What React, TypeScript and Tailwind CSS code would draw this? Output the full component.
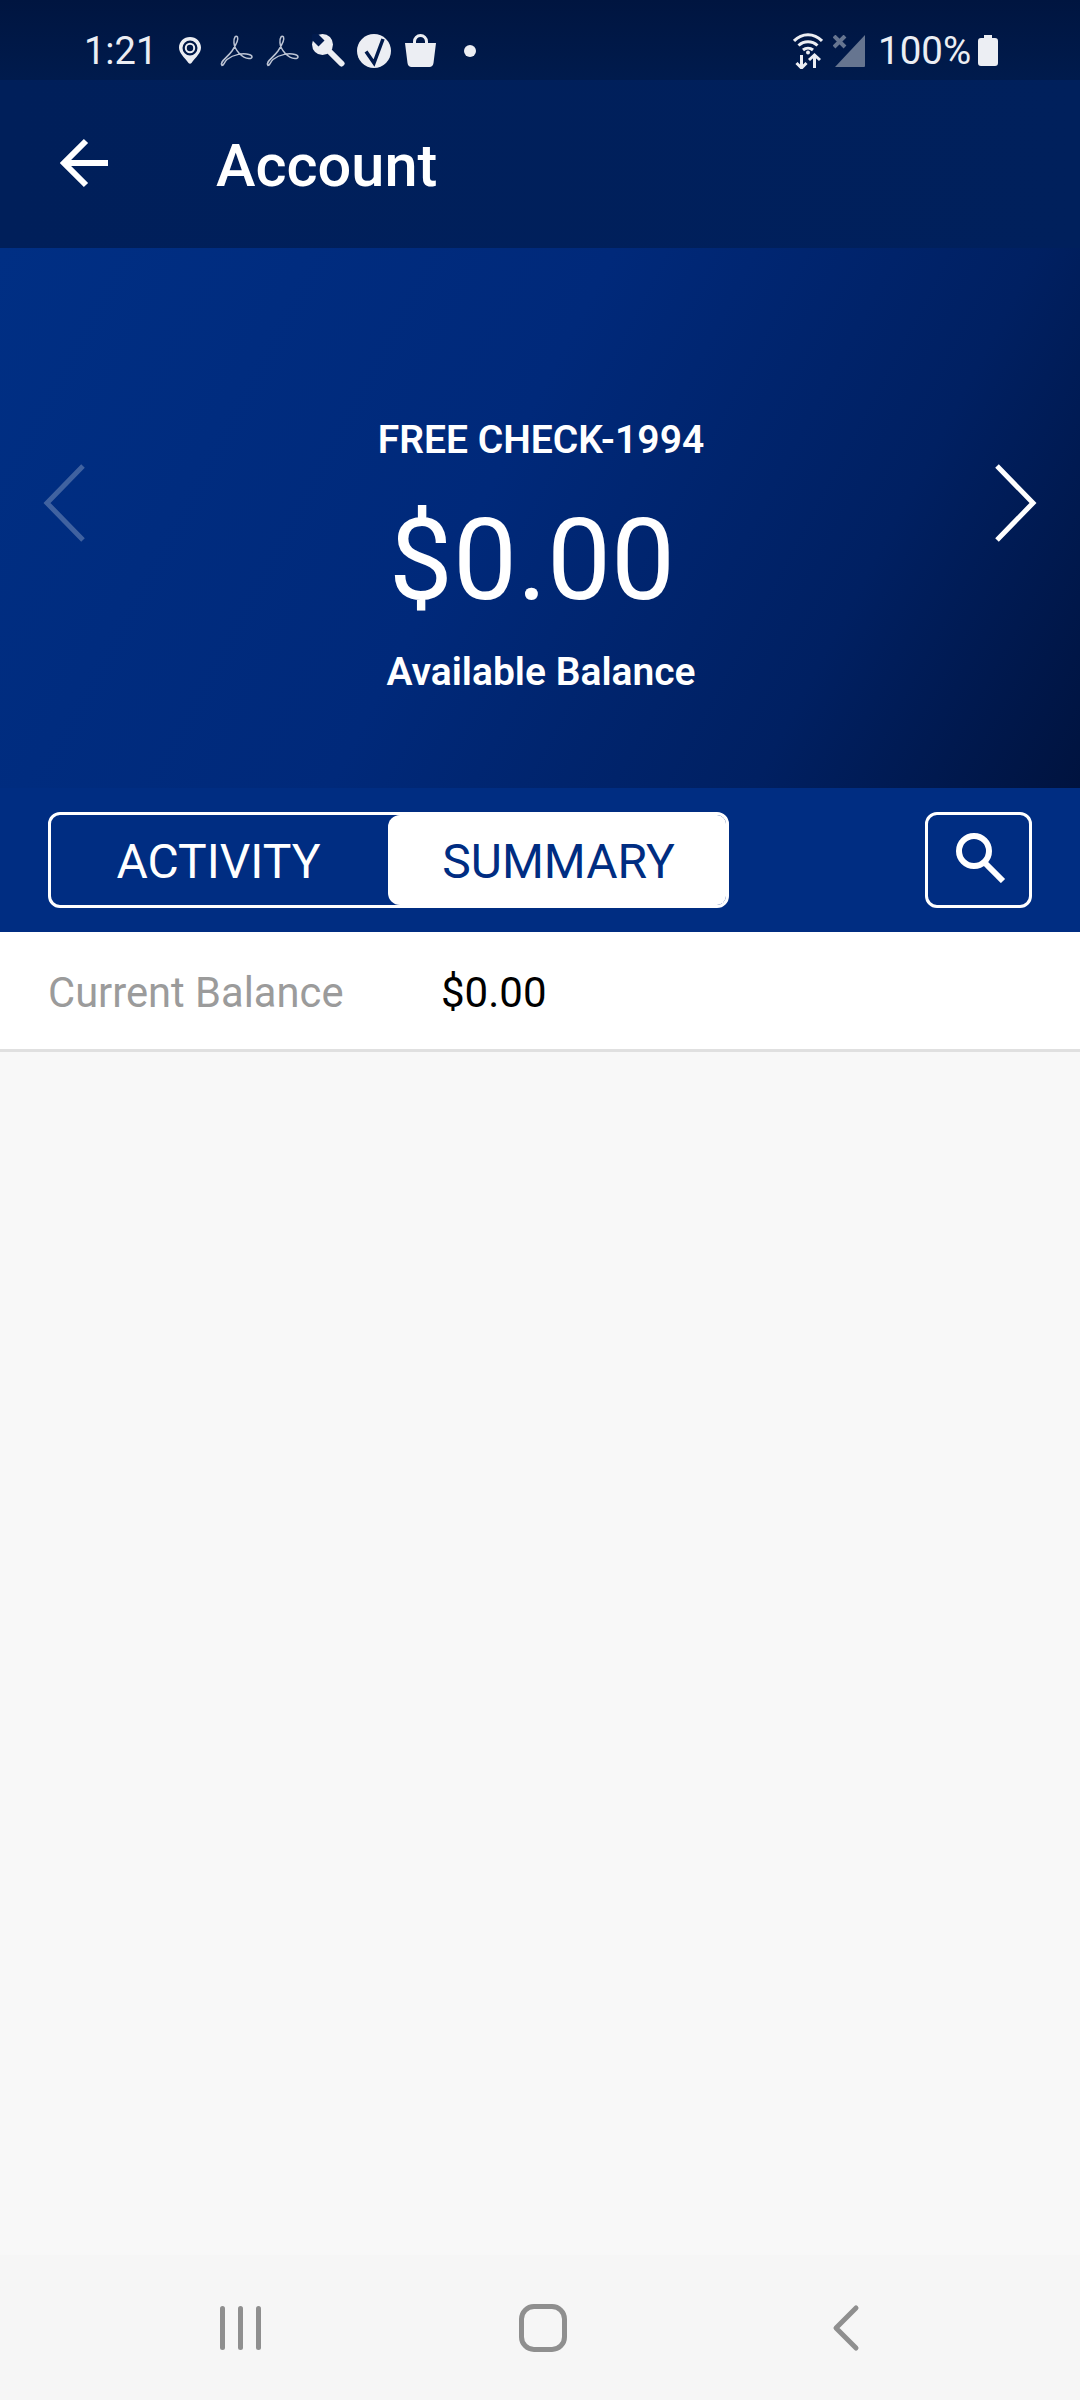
import React from "react";

const Pin = () => (
  <svg width="22" height="27" viewBox="0 0 22 27" className="block">
    <path fill="#eceef3" fillRule="evenodd" d="M11 0C4.800 0 0 4.800 0 10.500c0 5.500 5 9.500 9.500 15.500.8 1 2.200 1 3 0C17 20 22 16 22 10.500 22 4.800 17.200 0 11 0Zm0 3.500a7.500 7.500 0 1 1 0 15 7.500 7.500 0 0 1 0-15Z" />
    <circle cx="11" cy="11" r="4.200" fill="none" stroke="#eceef3" strokeWidth="2" />
  </svg>
);
const Acrobat = () => (
  <svg width="34" height="32" viewBox="0 0 34 32" fill="none" stroke="#bcc4d4" strokeWidth="1.500" className="block">
    <path d="M3 30.500C0 27 8 23 13 16 17 10 20 5 18.500 2 17 0 14.500 2 15 8c.6 7 8 15 15 15.500 4 .2 4-3 0-4-6-1.500-15-.5-22 5-3 2.500-3 6-5 6Z" />
  </svg>
);
const Wrench = () => (
  <svg width="33" height="33" viewBox="0 0 33 33" className="block">
    <circle cx="10.500" cy="10.500" r="10.500" fill="#eceef3" />
    <path d="M13 13 29.500 29.500" stroke="#eceef3" strokeWidth="6" strokeLinecap="round" />
    <path fill="#001a4d" d="M3.500-2.500 12.500 6.500 6.500 12.500-2.500 3.500Z" />
  </svg>
);
const VBadge = () => (
  <svg width="34" height="34" viewBox="0 0 34 34" className="block">
    <circle cx="17" cy="17" r="17" fill="#eceef3" />
    <path fill="none" stroke="#001a4d" strokeWidth="3.500" d="M9 17.500 17 29 26 5" />
  </svg>
);
const Bag = () => (
  <svg width="31" height="33" viewBox="0 0 31 33" className="block">
    <path fill="none" stroke="#eceef3" strokeWidth="3" d="M9.500 11V7.500a6 6 0 0 1 12 0V11" />
    <path fill="#eceef3" d="M0 9h31l-2.500 20c-.3 2.500-2 4-4 4h-18c-2 0-3.700-1.500-4-4Z" />
  </svg>
);
const Wifi = () => (
  <svg width="30" height="36" viewBox="0 0 30 36" fill="none" stroke="#eceef3" strokeWidth="3" className="block">
    <path d="M1 8c8-8.500 20-8.500 28 0M5.500 12.500c5.500-5 13.500-5 19 0M10 17c3-2.500 7-2.500 10 0" />
    <circle cx="15" cy="19.500" r="2" fill="#eceef3" stroke="none" />
    <path d="M8.500 22v13M3.500 30l5 5 5-5M21.500 35V22M16 27l5.500-5 5.500 5" />
  </svg>
);
const Signal = () => (
  <svg width="32" height="32" viewBox="0 0 32 32" className="block">
    <path fill="#667590" d="M32 0v31a1 1 0 0 1-1 1H2Z" />
    <path stroke="#667590" strokeWidth="4" d="M1 1l11 11M12 1 1 12" />
  </svg>
);
const Battery = () => (
  <svg width="20" height="31" viewBox="0 0 20 31" className="block">
    <path fill="#eceef3" d="M6 0h8v3h3a3 3 0 0 1 3 3v22a3 3 0 0 1-3 3H3a3 3 0 0 1-3-3V6a3 3 0 0 1 3-3h3Z" />
  </svg>
);

export default function App() {
  return (
    <div className="w-[1080px] h-[2400px] flex flex-col bg-[#f8f8f8] font-['Roboto',sans-serif] overflow-hidden">
      <div className="h-[80px] shrink-0 bg-[linear-gradient(to_bottom,#001540,#001b4d)] flex items-center justify-between pl-[84px] pr-[82px] pt-[21px] text-[#eceef3]">
        <div className="flex items-center">
          <span className="w-[69px] text-[38px] leading-[44px]">1:21</span>
          <span className="ml-[26px]"><Pin /></span>
          <span className="ml-[18px]"><Acrobat /></span>
          <span className="ml-[12px]"><Acrobat /></span>
          <span className="ml-[13px]"><Wrench /></span>
          <span className="ml-[12px]"><VBadge /></span>
          <span className="ml-[14px]"><Bag /></span>
          <span className="ml-[28px] w-[12px] h-[12px] rounded-full bg-[#eceef3]" />
        </div>
        <div className="flex items-center">
          <Wifi />
          <span className="ml-[10px]"><Signal /></span>
          <span className="ml-[13px] w-[92px] text-[38.5px] leading-[44px] whitespace-nowrap">100%</span>
          <span className="ml-[8px]"><Battery /></span>
        </div>
      </div>

      <div className="h-[168px] shrink-0 bg-[linear-gradient(to_right,#001f5a,#00205c)] flex items-center pl-[58px] text-white">
        <svg width="52" height="52" viewBox="0 0 52 52" fill="none" stroke="white" strokeWidth="6" className="mb-[2px]">
          <path d="M50 26H6M28 4 6 26l22 22" />
        </svg>
        <span className="ml-[106px] pt-[3px] text-[59.5px] leading-[66px] font-medium">Account</span>
      </div>

      <div className="relative h-[540px] shrink-0 bg-[linear-gradient(118deg,#002f84_0%,#00297a_45%,#002062_76%,#00133f_100%)] flex flex-col items-center text-white">
        <div className="mt-[170px] ml-[2px] text-[39px] leading-[44px] font-semibold whitespace-nowrap">FREE CHECK-1994</div>
        <div className="mt-[30px] -ml-[16px] text-[114px] leading-[136px]">$0.00</div>
        <div className="mt-[22px] ml-[2px] text-[39px] leading-[44px] font-semibold whitespace-nowrap">Available Balance</div>
        <svg className="absolute left-[42px] top-[216px] opacity-25" width="46" height="78" viewBox="0 0 46 78" fill="none" stroke="white" strokeWidth="5">
          <path d="M41 2 5 39l36 37" />
        </svg>
        <svg className="absolute left-[992px] top-[216px]" width="46" height="78" viewBox="0 0 46 78" fill="none" stroke="white" strokeWidth="5">
          <path d="M5 2l36 37L5 76" />
        </svg>
      </div>

      <div className="h-[144px] shrink-0 bg-[#002d82] flex items-center justify-between pl-[48px] pr-[48px]">
        <div className="w-[681px] h-[96px] rounded-[12px] border-[3px] border-white flex overflow-hidden text-[48px] leading-[56px]">
          <div className="w-[337px] flex items-center justify-center text-white pr-[2px] pt-[3px]">ACTIVITY</div>
          <div className="flex-1 bg-white rounded-l-[12px] flex items-center justify-center text-[#002d82] pl-[3px] pt-[3px]">SUMMARY</div>
        </div>
        <div className="w-[107px] h-[96px] rounded-[12px] border-[3px] border-white flex items-center justify-center">
          <svg width="50" height="50" viewBox="0 0 50 50" fill="none" stroke="white" strokeWidth="6" className="ml-[5px] mb-[4px]">
            <circle cx="18" cy="18" r="15" />
            <path d="M28 29 47 48" strokeWidth="6" />
          </svg>
        </div>
      </div>

      <div className="h-[120px] shrink-0 bg-white border-b-[3px] border-[#e0e0e0] flex items-center pl-[48px] pt-[4px]">
        <span className="w-[393px] text-[41.7px] leading-[50px] text-[#9b9b9b]">Current Balance</span>
        <span className="text-[42px] leading-[50px] text-black">$0.00</span>
      </div>

      <div className="flex-1" />

      <div className="h-[145px] shrink-0 bg-[#f6f6f6] relative">
        <div className="absolute left-[220px] top-[51px] flex gap-[13px]">
          <span className="w-[5px] h-[44px] rounded-full bg-[#8f8f8f]" />
          <span className="w-[5px] h-[44px] rounded-full bg-[#8f8f8f]" />
          <span className="w-[5px] h-[44px] rounded-full bg-[#8f8f8f]" />
        </div>
        <div className="absolute left-[519px] top-[49px] w-[48px] h-[48px] rounded-[15px] border-[5px] border-[#8f8f8f]" />
        <svg className="absolute left-[830px] top-[49px]" width="30" height="48" viewBox="0 0 30 48" fill="none" stroke="#8f8f8f" strokeWidth="5" strokeLinecap="round" strokeLinejoin="round">
          <path d="M26 4 6 24l20 20" />
        </svg>
      </div>
    </div>
  );
}
